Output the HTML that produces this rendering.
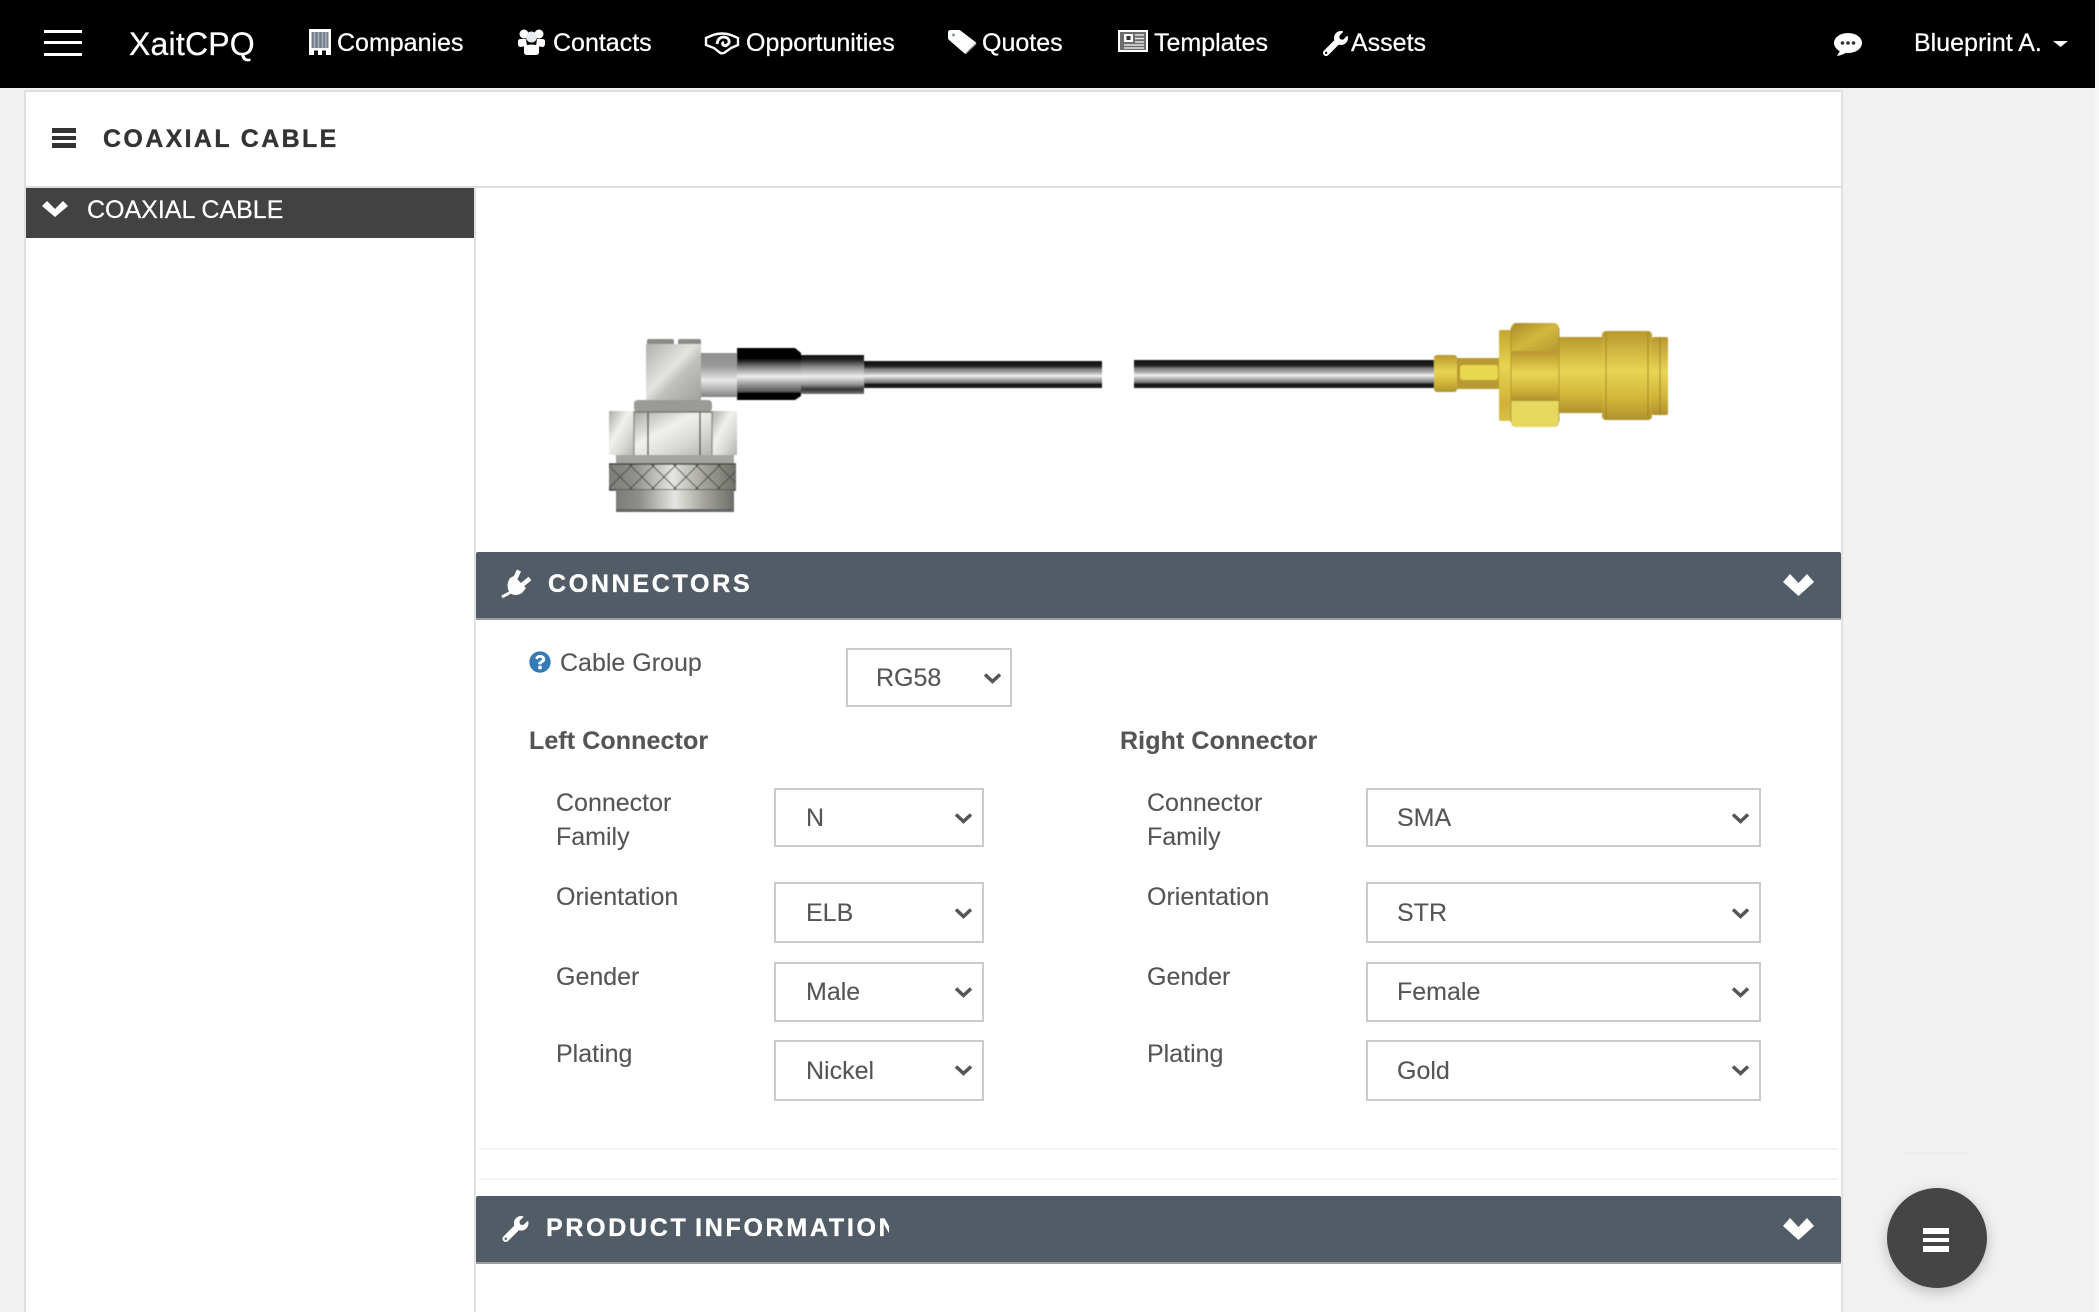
<!DOCTYPE html>
<html lang="en">
<head>
<meta charset="utf-8">
<title>XaitCPQ - Coaxial Cable</title>
<style>
html,body{margin:0;padding:0;width:2099px;height:1312px;overflow:hidden;background:#f1f1f1;font-family:"Liberation Sans",Arial,sans-serif;color:#555}
*{box-sizing:border-box}
.abs,.t,.n,select,svg.i{position:absolute}
nav{position:absolute;left:0;top:0;width:2095px;height:88px;background:#000}
.strip{position:absolute;left:2095px;top:0;width:4px;height:1312px;background:#f6f6f6}
.n{color:#fff;font-size:25px;line-height:30px;top:28px;white-space:nowrap;letter-spacing:0;-webkit-text-stroke:.25px #fff}
.t{font-size:25px;line-height:30px;white-space:nowrap;color:#555;-webkit-text-stroke:.12px #555}
.panel{position:absolute;left:24px;top:90px;width:1819px;height:1222px;background:#fff;border:2px solid #e0e0e0;border-bottom:0}
.hr{position:absolute;left:26px;top:186px;width:1815px;height:2px;background:#dedede}
.side{position:absolute;left:26px;top:188px;width:448px;height:50px;background:#424242}
.vr{position:absolute;left:474px;top:188px;width:2px;height:1124px;background:#e0e0e0}
.bar{position:absolute;left:476px;width:1365px;height:68px;background:#515c66;border-bottom:2px solid #9c9fa2;border-radius:2px 2px 0 0}
.h{position:absolute;color:#fff;font-weight:bold;font-size:25px;line-height:30px;letter-spacing:2.7px;white-space:nowrap;overflow:hidden;-webkit-text-stroke:.35px #fff}
select{appearance:none;-webkit-appearance:none;background:#fff;border:2px solid #cbcbcb;border-radius:0;color:#555;font:25px "Liberation Sans",Arial,sans-serif;margin:0;-webkit-text-stroke:.12px #555}
.sep{position:absolute;left:478px;width:1360px;height:2px;background:#f3f3f3;border-radius:2px}
.fab{position:absolute;left:1887px;top:1188px;width:100px;height:100px;border-radius:50%;background:#454545;box-shadow:0 4px 14px rgba(0,0,0,.22)}
.fab i{position:absolute;left:36px;width:26px;background:#fff}
</style>
</head>
<body>
<div class="strip"></div>

<nav>
  <!-- hamburger -->
  <div class="abs" style="left:44px;top:30px;width:38px;height:3px;background:#fff"></div>
  <div class="abs" style="left:44px;top:41px;width:38px;height:3px;background:#fff"></div>
  <div class="abs" style="left:44px;top:53px;width:38px;height:3px;background:#fff"></div>
  <div class="n" style="left:129px;top:24px;font-size:32px;line-height:40px;letter-spacing:.2px">XaitCPQ</div>

  <!-- building -->
  <svg class="i" style="left:308px;top:29px" width="24" height="26" viewBox="0 0 24 26">
    <rect x="1" y="0" width="22" height="26" fill="#fff"/>
    <rect x="3.500" y="3" width="17" height="16" fill="#7a7f86"/>
    <path d="M6.500 3v16M10.500 3v16M14.500 3v16M18 3v16" stroke="#9fb4c2" stroke-width="1.400"/>
    <rect x="6" y="21.500" width="4" height="4.500" fill="#111"/><rect x="14" y="21.500" width="4" height="4.500" fill="#111"/>
  </svg>
  <div class="n" style="left:337px">Companies</div>

  <!-- users -->
  <svg class="i" style="left:518px;top:29px" width="27" height="26" viewBox="0 0 27 26" fill="#fff">
    <circle cx="6" cy="5" r="4.500"/><circle cx="21" cy="5" r="4.500"/><circle cx="13.500" cy="8" r="5.500" fill="#e8ecf2"/>
    <path d="M0 12q0-2 3-2h5l1 7-7 1q-2-1-2-3zM19 10h5q3 0 3 2v3q0 2-2 3l-7-1z"/>
    <path d="M6 17q7.500-3 15 0v6q0 3-3 3H9q-3 0-3-3z"/>
  </svg>
  <div class="n" style="left:553px">Contacts</div>

  <!-- handshake -->
  <svg class="i" style="left:704px;top:32px" width="36" height="23" viewBox="0 0 36 23" fill="none" stroke="#fff">
    <path d="M2 6l7-3q9-3 18 0l7 3v7l-7 3-7 5q-3 1-5-1l-5-4-8-3z" stroke-width="2.400"/>
    <path d="M13 12q1-7 7-7 6 1 5 6-3 4-6 2-1-2 1-3" stroke-width="2.800"/>
  </svg>
  <div class="n" style="left:746px">Opportunities</div>

  <!-- tag -->
  <svg class="i" style="left:948px;top:30px" width="29" height="24" viewBox="0 0 29 24">
    <path d="M0 2.500Q0 0 2.500 0H11q1 0 2 1l14.500 11q1.500 1.500 0 3L19 23q-1.500 1.500-3 0L1 10Q0 9 0 8z" fill="#fff"/>
    <path d="M28 13.500L18.500 23" stroke="#888" stroke-width="1.200"/>
    <circle cx="5.500" cy="5" r="1.500" fill="#89a"/>
  </svg>
  <div class="n" style="left:982px">Quotes</div>

  <!-- newspaper -->
  <svg class="i" style="left:1118px;top:30px" width="30" height="22" viewBox="0 0 30 22">
    <rect x="1" y="1" width="28" height="20" fill="#6d6d6d" stroke="#fff" stroke-width="2"/>
    <rect x="6" y="4" width="9" height="8" fill="#fff"/><rect x="8.500" y="6" width="4" height="4" fill="#333"/>
    <path d="M17 5h9M17 8.500h9M17 12h9M6 15h20M6 18h20" stroke="#e4e4e4" stroke-width="1.400"/>
  </svg>
  <div class="n" style="left:1154px">Templates</div>

  <!-- wrench -->
  <svg class="i" style="left:1323px;top:31px" width="25" height="25" viewBox="0 0 512 512">
    <path fill="#fff" d="M507.73 109.1c-2.24-9.03-13.54-12.09-20.12-5.51l-74.36 74.36-67.88-11.31-11.31-67.88 74.36-74.36c6.62-6.62 3.43-17.9-5.66-20.16-47.38-11.74-99.55.91-136.58 37.93-39.64 39.64-50.55 97.1-34.05 147.2L18.74 402.76c-24.99 24.99-24.99 65.51 0 90.5 24.99 24.99 65.51 24.99 90.5 0l213.21-213.21c50.12 16.71 107.47 5.68 147.37-34.22 37.07-37.07 49.7-89.32 37.91-136.73zM64 472c-13.25 0-24-10.75-24-24 0-13.26 10.75-24 24-24s24 10.74 24 24c0 13.25-10.75 24-24 24z"/>
  </svg>
  <div class="n" style="left:1351px">Assets</div>

  <!-- chat -->
  <svg class="i" style="left:1834px;top:33px" width="28" height="23" viewBox="0 0 28 23">
    <ellipse cx="14" cy="10" rx="14" ry="10" fill="#fff"/>
    <path d="M7 16L3 23q6-1 10-4z" fill="#fff"/>
    <circle cx="8.500" cy="10" r="1.800" fill="#333"/><circle cx="14" cy="10" r="1.800" fill="#333"/><circle cx="19.500" cy="10" r="1.800" fill="#333"/>
  </svg>
  <div class="n" style="left:1914px">Blueprint A.</div>
  <svg class="i" style="left:2053px;top:41px" width="15" height="6" viewBox="0 0 15 6"><path d="M0 0h15L7.500 6z" fill="#fff"/></svg>
</nav>

<div class="panel"></div>

<!-- page heading -->
<div class="abs" style="left:52px;top:128px;width:24px;height:5px;background:#333"></div>
<div class="abs" style="left:52px;top:136px;width:24px;height:4px;background:#333"></div>
<div class="abs" style="left:52px;top:143px;width:24px;height:5px;background:#333"></div>
<div class="h" style="left:103px;top:124px;color:#333;letter-spacing:2.35px;-webkit-text-stroke:.35px #333">COAXIAL CABLE</div>
<div class="hr"></div>

<!-- sidebar -->
<div class="side"></div>
<svg class="i" style="left:42px;top:201px" width="26" height="16" viewBox="42 201 26 16"><path fill="#fff" d="M42 206l5-5 8 8 8-8 5 5-13 11z"/></svg>
<div class="t" style="left:87px;top:195px;color:#fff;-webkit-text-stroke:.2px #fff">COAXIAL CABLE</div>
<div class="vr"></div>

<!-- product image -->
<svg class="i" style="left:600px;top:315px" width="1080" height="210" viewBox="600 315 1080 210">
  <defs>
    <linearGradient id="cab" x1="0" y1="0" x2="0" y2="1">
      <stop offset="0" stop-color="#111"/><stop offset=".2" stop-color="#222"/><stop offset=".32" stop-color="#8a8a8a"/><stop offset=".42" stop-color="#a5a5a5"/><stop offset=".55" stop-color="#f2f2f2"/><stop offset=".68" stop-color="#aaa"/><stop offset=".8" stop-color="#777"/><stop offset=".86" stop-color="#111"/><stop offset="1" stop-color="#222"/>
    </linearGradient>
    <linearGradient id="slv" x1="0" y1="0" x2="0" y2="1">
      <stop offset="0" stop-color="#000"/><stop offset=".2" stop-color="#000"/><stop offset=".35" stop-color="#777"/><stop offset=".55" stop-color="#eee"/><stop offset=".7" stop-color="#999"/><stop offset=".84" stop-color="#555"/><stop offset=".87" stop-color="#000"/><stop offset="1" stop-color="#000"/>
    </linearGradient>
    <linearGradient id="slv2" x1="0" y1="0" x2="0" y2="1">
      <stop offset="0" stop-color="#111"/><stop offset=".12" stop-color="#222"/><stop offset=".3" stop-color="#888"/><stop offset=".55" stop-color="#eee"/><stop offset=".75" stop-color="#999"/><stop offset=".88" stop-color="#333"/><stop offset="1" stop-color="#777"/>
    </linearGradient>
    <linearGradient id="stub" x1="0" y1="0" x2="0" y2="1">
      <stop offset="0" stop-color="#8e8e8e"/><stop offset=".3" stop-color="#999"/><stop offset=".62" stop-color="#e8e8e8"/><stop offset=".85" stop-color="#aaa"/><stop offset="1" stop-color="#808080"/>
    </linearGradient>
    <linearGradient id="sb" x1="0" y1="0" x2="1" y2="1">
      <stop offset="0" stop-color="#b0b0ac"/><stop offset=".45" stop-color="#e4e4e0"/><stop offset=".6" stop-color="#c0c0bc"/><stop offset="1" stop-color="#a0a09c"/>
    </linearGradient>
    <linearGradient id="hex" x1="0" y1="0" x2="1" y2="1">
      <stop offset="0" stop-color="#aaaaa6"/><stop offset=".4" stop-color="#f0f0ec"/><stop offset=".65" stop-color="#dcdcd8"/><stop offset="1" stop-color="#b4b4b0"/>
    </linearGradient>
    <linearGradient id="col" x1="0" y1="0" x2="1" y2="0">
      <stop offset="0" stop-color="#7c7c78"/><stop offset=".2" stop-color="#8e8e8a"/><stop offset=".5" stop-color="#e6e6e2"/><stop offset=".75" stop-color="#a4a49c"/><stop offset="1" stop-color="#6e6e68"/>
    </linearGradient>
    <linearGradient id="gv" x1="0" y1="0" x2="0" y2="1">
      <stop offset="0" stop-color="#b9982e"/><stop offset=".45" stop-color="#e8d654"/><stop offset=".75" stop-color="#d2b63a"/><stop offset="1" stop-color="#b0922c"/>
    </linearGradient>
    <linearGradient id="gv2" x1="0" y1="0" x2="0" y2="1">
      <stop offset="0" stop-color="#c4a52f"/><stop offset=".4" stop-color="#e6d450"/><stop offset=".8" stop-color="#d0b338"/><stop offset="1" stop-color="#d8c048"/>
    </linearGradient>
    <linearGradient id="gt" x1="0" y1="0" x2="1" y2="1">
      <stop offset="0" stop-color="#a78a2a"/><stop offset=".5" stop-color="#d2b73f"/><stop offset="1" stop-color="#b79a30"/>
    </linearGradient>
    <pattern id="kn" width="22" height="22" patternUnits="userSpaceOnUse" patternTransform="translate(609 466)">
      <path d="M0 0L22 22M22 0L0 22" stroke="#4a4a4a" stroke-width="1"/>
    </pattern>
    <filter id="bl" x="-2%" y="-2%" width="104%" height="104%"><feGaussianBlur stdDeviation=".6"/></filter>
  </defs>
  <g filter="url(#bl)">
    <!-- left connector -->
    <rect x="647" y="339" width="27" height="6" rx="2" fill="#8b8b88"/>
    <rect x="678" y="339" width="23" height="6" rx="2" fill="#8b8b88"/>
    <rect x="646" y="344" width="55" height="56" fill="url(#sb)"/>
    <rect x="701" y="353" width="36" height="44" fill="url(#stub)"/>
    <path d="M737 348h58l6 5v43l-6 4h-58z" fill="url(#slv)"/>
    <rect x="801" y="355" width="63" height="39" fill="url(#slv2)"/>
    <rect x="864" y="361" width="238" height="27" fill="url(#cab)"/>
    <rect x="634" y="400" width="78" height="12" rx="4" fill="#9a9a96"/>
    <rect x="609" y="411" width="25" height="44" fill="url(#hex)"/>
    <rect x="712" y="411" width="25" height="44" fill="url(#hex)"/>
    <rect x="634" y="412" width="78" height="43" fill="url(#hex)"/>
    <path d="M648 412v43M700 412v43" stroke="#444" stroke-width="1.300"/>
    <path d="M634 411v44M712 411v44" stroke="#808080" stroke-width="1.200"/>
    <path d="M634 412h78" stroke="#777" stroke-width="1.500"/>
    <rect x="616" y="455" width="118" height="9" fill="#a4a4a0"/>
    <rect x="609" y="464" width="127" height="26" fill="url(#col)"/>
    <rect x="609" y="464" width="127" height="26" fill="url(#kn)"/>
    <path d="M609 464h127M609 490h127" stroke="#444" stroke-width="1.500"/>
    <rect x="616" y="490" width="118" height="22" fill="url(#col)"/>
    <rect x="616" y="509" width="118" height="3" fill="#666"/>
    <!-- right connector -->
    <rect x="1134" y="360" width="300" height="28" fill="url(#cab)"/>
    <rect x="1434" y="355" width="23" height="37" rx="3" fill="url(#gv)"/>
    <rect x="1457" y="358" width="42" height="31" fill="#b89a30"/>
    <rect x="1460" y="365" width="38" height="15" rx="3" fill="#e8d850"/>
    <rect x="1499" y="330" width="12" height="91" rx="2" fill="url(#gv2)"/>
    <rect x="1559" y="337" width="43" height="76" fill="url(#gv)"/>
    <rect x="1602" y="331" width="50" height="89" rx="4" fill="url(#gv)"/>
    <rect x="1652" y="337" width="16" height="78" rx="2" fill="url(#gv)"/>
    <path d="M1606 333v85M1648 333v85M1660 337v78" stroke="#9a7f24" stroke-width=".9"/>
    <rect x="1511" y="323" width="48" height="104" rx="5" fill="#d8c044"/>
    <path d="M1515 323h40l4 5v23h-48v-23z" fill="url(#gt)"/>
    <rect x="1511" y="351" width="48" height="50" fill="url(#gv)"/>
    <path d="M1511 401h48v21l-4 5h-40l-4-5z" fill="#e6d85e"/>
    <path d="M1511 328v94M1559 328v94" stroke="#a98c2a" stroke-width=".8"/>
  </g>
</svg>

<!-- connectors header -->
<div class="bar" style="top:552px"></div>
<svg class="i" style="left:501px;top:568px" width="30" height="30" viewBox="0 0 30 30">
  <path d="M9 10L13 8 25 20 21 25Q14 29 9 25 4 18 9 10z" fill="#fff"/>
  <path d="M14 11L18 2.500M21 17L29 10.500" stroke="#fff" stroke-width="4.500" fill="none"/>
  <path d="M9 24.500L1 29" stroke="#fff" stroke-width="3" fill="none"/>
</svg>
<div class="h" style="left:548px;top:569px">CONNECTORS</div>
<svg class="i" style="left:1783px;top:574px" width="31" height="22" viewBox="0 0 31 22"><path fill="#fff" d="M0 8l7-8 8.500 9L24 0l7 8-15.500 14z"/></svg>

<!-- cable group -->
<svg class="i" style="left:529px;top:651px" width="22" height="22" viewBox="0 0 512 512"><path fill="#337ab7" d="M504 256c0 136.997-111.043 248-248 248S8 392.997 8 256C8 119.083 119.043 8 256 8s248 111.083 248 248zM262.655 90c-54.497 0-89.255 22.957-116.549 63.758-3.536 5.286-2.353 12.415 2.715 16.258l34.699 26.31c5.205 3.947 12.621 3.008 16.665-2.122 17.864-22.658 30.113-35.797 57.303-35.797 20.429 0 45.698 13.148 45.698 32.958 0 14.976-12.363 22.667-32.534 33.976C247.128 238.528 216 254.941 216 296v4c0 6.627 5.373 12 12 12h56c6.627 0 12-5.373 12-12v-1.333c0-28.462 83.186-29.647 83.186-106.667 0-58.002-60.165-102-116.531-102zM256 338c-25.365 0-46 20.635-46 46 0 25.364 20.635 46 46 46s46-20.636 46-46c0-25.365-20.635-46-46-46z"/></svg>
<div class="t" style="left:560px;top:648px">Cable Group</div>
<select style="left:846px;top:648px;width:166px;height:59px;padding-left:28px"><option>RG58</option></select>
<svg class="i" style="left:983px;top:672px" width="19" height="12" viewBox="0 0 19 12"><path d="M2 2.500l7.500 7 7.500-7" fill="none" stroke="#555" stroke-width="3.500"/></svg>

<!-- left connector form -->
<div class="t" style="left:529px;top:726px;font-weight:bold;letter-spacing:.1px">Left Connector</div>
<div class="t" style="left:556px;top:788px">Connector</div>
<div class="t" style="left:556px;top:822px">Family</div>
<div class="t" style="left:556px;top:882px">Orientation</div>
<div class="t" style="left:556px;top:962px">Gender</div>
<div class="t" style="left:556px;top:1039px">Plating</div>
<select style="left:774px;top:788px;width:210px;height:59px;padding-left:30px"><option>N</option></select>
<select style="left:774px;top:882px;width:210px;height:61px;padding-left:30px"><option>ELB</option></select>
<select style="left:774px;top:962px;width:210px;height:60px;padding-left:30px"><option>Male</option></select>
<select style="left:774px;top:1040px;width:210px;height:61px;padding-left:30px"><option>Nickel</option></select>
<svg class="i" style="left:954px;top:812px" width="19" height="12" viewBox="0 0 19 12"><path d="M2 2.500l7.500 7 7.500-7" fill="none" stroke="#555" stroke-width="3.500"/></svg>
<svg class="i" style="left:954px;top:907px" width="19" height="12" viewBox="0 0 19 12"><path d="M2 2.500l7.500 7 7.500-7" fill="none" stroke="#555" stroke-width="3.500"/></svg>
<svg class="i" style="left:954px;top:986px" width="19" height="12" viewBox="0 0 19 12"><path d="M2 2.500l7.500 7 7.500-7" fill="none" stroke="#555" stroke-width="3.500"/></svg>
<svg class="i" style="left:954px;top:1064px" width="19" height="12" viewBox="0 0 19 12"><path d="M2 2.500l7.500 7 7.500-7" fill="none" stroke="#555" stroke-width="3.500"/></svg>

<!-- right connector form -->
<div class="t" style="left:1120px;top:726px;font-weight:bold;letter-spacing:.1px">Right Connector</div>
<div class="t" style="left:1147px;top:788px">Connector</div>
<div class="t" style="left:1147px;top:822px">Family</div>
<div class="t" style="left:1147px;top:882px">Orientation</div>
<div class="t" style="left:1147px;top:962px">Gender</div>
<div class="t" style="left:1147px;top:1039px">Plating</div>
<select style="left:1366px;top:788px;width:395px;height:59px;padding-left:29px"><option>SMA</option></select>
<select style="left:1366px;top:882px;width:395px;height:61px;padding-left:29px"><option>STR</option></select>
<select style="left:1366px;top:962px;width:395px;height:60px;padding-left:29px"><option>Female</option></select>
<select style="left:1366px;top:1040px;width:395px;height:61px;padding-left:29px"><option>Gold</option></select>
<svg class="i" style="left:1731px;top:812px" width="19" height="12" viewBox="0 0 19 12"><path d="M2 2.500l7.500 7 7.500-7" fill="none" stroke="#555" stroke-width="3.500"/></svg>
<svg class="i" style="left:1731px;top:907px" width="19" height="12" viewBox="0 0 19 12"><path d="M2 2.500l7.500 7 7.500-7" fill="none" stroke="#555" stroke-width="3.500"/></svg>
<svg class="i" style="left:1731px;top:986px" width="19" height="12" viewBox="0 0 19 12"><path d="M2 2.500l7.500 7 7.500-7" fill="none" stroke="#555" stroke-width="3.500"/></svg>
<svg class="i" style="left:1731px;top:1064px" width="19" height="12" viewBox="0 0 19 12"><path d="M2 2.500l7.500 7 7.500-7" fill="none" stroke="#555" stroke-width="3.500"/></svg>

<div class="sep" style="top:1148px"></div>
<div class="sep" style="top:1178px"></div>

<!-- product information header -->
<div class="bar" style="top:1196px"></div>
<svg class="i" style="left:502px;top:1216px" width="27" height="26" viewBox="0 0 512 512"><path fill="#fff" d="M507.73 109.1c-2.24-9.03-13.54-12.09-20.12-5.51l-74.36 74.36-67.88-11.31-11.31-67.88 74.36-74.36c6.62-6.62 3.43-17.9-5.66-20.16-47.38-11.74-99.55.91-136.58 37.93-39.64 39.64-50.55 97.1-34.05 147.2L18.74 402.76c-24.99 24.99-24.99 65.51 0 90.5 24.99 24.99 65.51 24.99 90.5 0l213.21-213.21c50.12 16.71 107.47 5.68 147.37-34.22 37.07-37.07 49.7-89.32 37.91-136.73zM64 472c-13.25 0-24-10.75-24-24 0-13.26 10.75-24 24-24s24 10.74 24 24c0 13.25-10.75 24-24 24z"/></svg>
<div class="h" style="left:546px;top:1213px;width:343px;letter-spacing:2.7px;word-spacing:-3px">PRODUCT INFORMATION</div>
<svg class="i" style="left:1783px;top:1218px" width="31" height="22" viewBox="0 0 31 22"><path fill="#fff" d="M0 8l7-8 8.500 9L24 0l7 8-15.500 14z"/></svg>

<!-- floating action button -->
<div class="abs" style="left:1905px;top:1152px;width:65px;height:2px;background:#ededed"></div>
<div class="fab">
  <i style="top:40px;height:6px"></i><i style="top:50px;height:4px"></i><i style="top:58px;height:6px"></i>
</div>
</body>
</html>
